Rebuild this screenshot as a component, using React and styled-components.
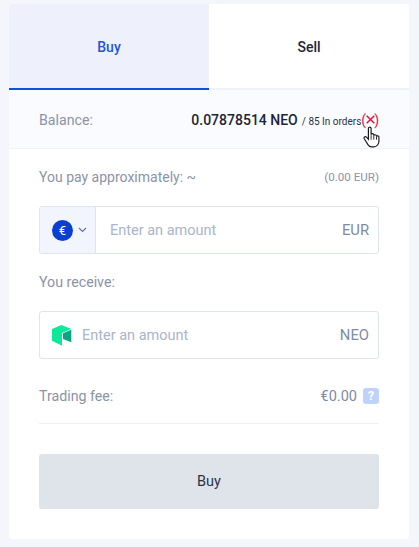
import styled, { createGlobalStyle } from "styled-components";

const Global = createGlobalStyle`
    html, body {
        margin: 0;
        padding: 0;
        background: #f4f6fb;
        font-family: Roboto, "Liberation Sans", sans-serif;
    }
`

const Page = styled.div`
    padding: 4px 10px 8px 9px;
    height: 547px;
    box-sizing: border-box;
`

const Card = styled.div`
    width: 400px;
    height: 535px;
    background: #fff;
    border-radius: 4px;
    overflow: hidden;
`

const Tabs = styled.div`
    display: flex;
    height: 86px;
`

const Tab = styled.div`
    flex: 1;
    display: flex;
    align-items: center;
    justify-content: center;
    box-sizing: border-box;
    padding-top: 1px;
    font-size: 14px;
    font-weight: 500;
    color: ${(p) => (p.$active ? "#1f55d8" : "#1c2437")};
    background: ${(p) => (p.$active ? "#eef0fb" : "#fff")};
    border-bottom: 2px solid ${(p) => (p.$active ? "#1450d6" : "#eef1f8")};
`

const BalanceRow = styled.div`
    position: relative;
    height: 59px;
    box-sizing: border-box;
    display: flex;
    align-items: center;
    justify-content: space-between;
    padding: 1px 30px 0;
    background: #fafbff;
    border-bottom: 1px solid #eef1f8;
`

const Muted = styled.span`
    font-size: ${(p) => p.$size || 14.2}px;
    color: #8a93a8;
`

const BalanceValue = styled.div`
    display: flex;
    align-items: baseline;
    font-size: 14px;
    font-weight: 500;
    color: #1c2437;
`

const Orders = styled.span`
    font-size: 10px;
    font-weight: 400;
    margin-left: 4px;
    color: #2a3248;
`

const Cancel = styled.span`
    display: flex;
    align-items: center;
    font-size: 14px;
    font-weight: 400;
    color: #e0144c;
    svg {
        margin: 0 -0.5px;
    }
`

const Pointer = styled.svg`
    position: absolute;
    left: 354px;
    top: 36px;
    width: 18px;
    height: 22px;
`

const Form = styled.div`
    padding: 0 30px;
`

const LabelRow = styled.div`
    display: flex;
    align-items: center;
    justify-content: space-between;
    box-sizing: border-box;
    height: 57px;
    padding-bottom: 2px;
`

const SmallNote = styled.span`
    font-size: 11.6px;
    color: #8a93a8;
`

const Field = styled.div`
    display: flex;
    align-items: center;
    height: 48px;
    box-sizing: border-box;
    border: 1px solid #e0e4ee;
    border-radius: 3px;
    overflow: hidden;
`

const CurrencySelect = styled.div`
    width: 56px;
    height: 100%;
    flex: none;
    display: flex;
    align-items: center;
    gap: 5px;
    box-sizing: border-box;
    padding-left: 12px;
    background: #f2f5fd;
    border-right: 1px solid #e0e4ee;
`

const EuroBadge = styled.span`
    width: 21px;
    height: 21px;
    border-radius: 50%;
    background: #0a3fd0;
    color: #fff;
    font-size: 13px;
    font-weight: 400;
    display: flex;
    align-items: center;
    justify-content: center;
`

const TokenIcon = styled.svg`
    width: 20px;
    height: 21px;
    flex: none;
    margin-left: 12px;
`

const Amount = styled.input`
    flex: 1;
    min-width: 0;
    border: 0;
    outline: 0;
    background: transparent;
    font-family: inherit;
    font-size: 14.5px;
    padding: 0 0 0 ${(p) => p.$inset}px;
    color: #1c2437;
    &::placeholder {
        color: #a9b5ca;
        opacity: 1;
    }
`

const Unit = styled.span`
    font-size: 14.8px;
    color: #7d8aa6;
    padding-right: 9px;
`

const FeeRow = styled.div`
    display: flex;
    align-items: center;
    justify-content: space-between;
    height: 65px;
    box-sizing: border-box;
    padding-top: 10px;
    border-bottom: 1px solid #eef1f8;
`

const FeeValue = styled.div`
    display: flex;
    align-items: center;
    gap: 6px;
    font-size: 14.5px;
    color: #7d8aa6;
`

const Help = styled.span`
    width: 16px;
    height: 16px;
    border-radius: 3px;
    background: #bfd2fb;
    color: #fff;
    font-size: 12px;
    font-weight: 700;
    display: flex;
    align-items: center;
    justify-content: center;
`

const Submit = styled.button`
    display: block;
    width: 100%;
    height: 55px;
    margin-top: 30px;
    border: 0;
    border-radius: 3px;
    background: #dfe3ea;
    color: #2a3248;
    font-family: inherit;
    font-size: 14.5px;
`

export default function App() {
    return (
        <Page>
            <Global />
            <Card>
                <Tabs>
                    <Tab $active>Buy</Tab>
                    <Tab>Sell</Tab>
                </Tabs>
                <BalanceRow>
                    <Muted>Balance:</Muted>
                    <BalanceValue>
                        0.07878514 NEO
                        <Orders>/ 85 In orders</Orders>
                        <Cancel>
                            (
                            <svg width="9" height="9" viewBox="0 0 9 9">
                                <path d="M.7.7l7.6 7.6M8.3.7L.7 8.3" stroke="#e0144c" strokeWidth="1.5" />
                            </svg>
                            )
                        </Cancel>
                    </BalanceValue>
                    <Pointer viewBox="0 0 20 24">
                        <path
                            d="M6 2.5c0-2 3-2 3 0v7c.2-1.6 2.8-1.6 3 0v1c.2-1.4 2.7-1.4 3 .2v.8c.3-1.2 2.6-1.1 2.7.6v4.4c0 3-2 6.5-5.7 6.5H9.5c-2 0-3-1-4-2.5L1.4 14c-1-1.7 1-3.2 2.4-1.8L6 14.5z"
                            fill="#fff"
                            stroke="#1a1a1a"
                            strokeWidth="1.3"
                        />
                        <path d="M9 10v5M12 10.5v4.5M15 11.5v3.5" stroke="#1a1a1a" strokeWidth="1" />
                    </Pointer>
                </BalanceRow>
                <Form>
                    <LabelRow>
                        <Muted $size={14}>You pay approximately: ~</Muted>
                        <SmallNote>(0.00 EUR)</SmallNote>
                    </LabelRow>
                    <Field>
                        <CurrencySelect>
                            <EuroBadge>€</EuroBadge>
                            <svg width="9" height="6" viewBox="0 0 9 6">
                                <path d="M1 1l3.5 3.5L8 1" fill="none" stroke="#6a7690" strokeWidth="1.2" />
                            </svg>
                        </CurrencySelect>
                        <Amount $inset={14} placeholder="Enter an amount" />
                        <Unit>EUR</Unit>
                    </Field>
                    <LabelRow>
                        <Muted>You receive:</Muted>
                    </LabelRow>
                    <Field>
                        <TokenIcon viewBox="0 0 20 21">
                            <path d="M0 4L9.3 0l10 4L10 8v12.7L0 15.7z" fill="#0ee89a" />
                            <path d="M11 8.3l8.3-3.6v12.6L11 14z" fill="#0aa583" />
                        </TokenIcon>
                        <Amount $inset={10} placeholder="Enter an amount" />
                        <Unit>NEO</Unit>
                    </Field>
                    <FeeRow>
                        <Muted>Trading fee:</Muted>
                        <FeeValue>
                            €0.00
                            <Help>?</Help>
                        </FeeValue>
                    </FeeRow>
                    <Submit>Buy</Submit>
                </Form>
            </Card>
        </Page>
    )
}
